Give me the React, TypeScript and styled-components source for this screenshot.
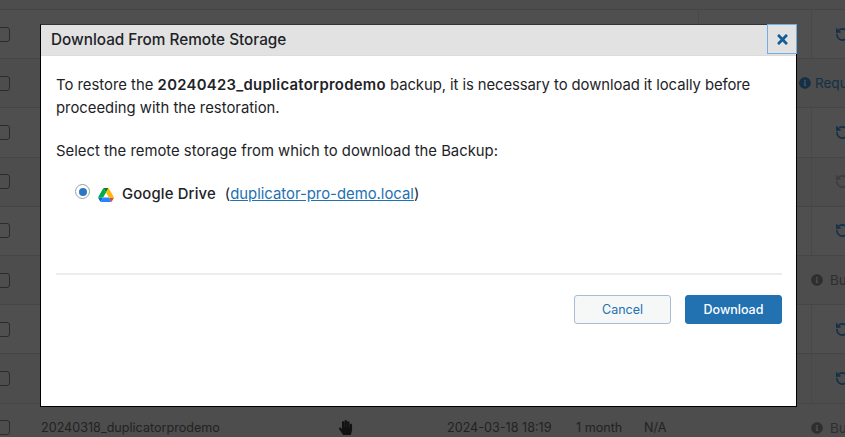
import React from 'react';
import styled, { createGlobalStyle } from 'styled-components';
import { FaHandPaper, FaInfoCircle, FaTimes } from 'react-icons/fa';
import { RotateCcw } from 'lucide-react';

const GlobalStyle = createGlobalStyle`
  html, body {
    margin: 0;
    padding: 0;
    width: 845px;
    height: 437px;
    overflow: hidden;
    background: #4e4e4e;
    font-family: Inter, "Liberation Sans", sans-serif;
  }
`;

const Page = styled.div`
  position: relative;
  width: 845px;
  height: 437px;
  overflow: hidden;
`;

const Table = styled.div`
  display: flex;
  flex-direction: column;
  padding-top: 9px;
  background: #4d4d4d;
`;

const Row = styled.div<{ $even?: boolean }>`
  display: grid;
  grid-template-columns: 41px 297px 109px 129px 68px 54px 113px 34px;
  align-items: stretch;
  height: 49.2px;
  box-sizing: border-box;
  border-top: 1px solid #454545;
  background: ${(p) => (p.$even ? '#4f4f4f' : '#4d4d4d')};
  color: #222;
  font-size: 12.6px;
`;

const Cell = styled.div<{ $col: number; $span?: number; $line?: boolean; $pad?: number }>`
  grid-column: ${(p) => p.$col} / span ${(p) => p.$span ?? 1};
  display: flex;
  align-items: center;
  padding-left: ${(p) => p.$pad ?? 0}px;
  border-left: ${(p) => (p.$line ? '1px solid #484848' : 'none')};
  white-space: nowrap;
  overflow: hidden;
`;

const Check = styled.span`
  display: block;
  flex: none;
  width: 13px;
  height: 13px;
  margin-left: -5px;
  border: 1px solid #2b2b2b;
  border-radius: 3px;
`;

const Status = styled.span<{ $blue?: boolean }>`
  display: inline-flex;
  align-items: center;
  gap: ${(p) => (p.$blue ? 4 : 7)}px;
  font-size: 13.5px;
  color: ${(p) => (p.$blue ? '#123047' : '#2e2e2e')};
`;

const Restore = styled(RotateCcw)<{ $muted?: boolean }>`
  flex: none;
  width: 15px;
  height: 15px;
  margin-left: 23px;
  color: ${(p) => (p.$muted ? '#3d3d3d' : '#123047')};
`;

const Overlay = styled.div`
  position: absolute;
  left: 40px;
  top: 24px;
  width: 757px;
  height: 383px;
  box-sizing: border-box;
  display: flex;
  flex-direction: column;
  background: #fff;
  border: 1px solid #000;
  border-top-color: #333;
`;

const TitleBar = styled.div`
  position: relative;
  flex: none;
  height: 31px;
  box-sizing: border-box;
  padding: 6px 0 0 10px;
  background: #e2e2e2;
  border-bottom: 1px solid #dcdcdc;
  font-size: 15.3px;
  line-height: 18px;
  font-weight: 500;
  color: #1d2327;
`;

const CloseButton = styled.button`
  position: absolute;
  right: -1px;
  top: -1px;
  width: 30px;
  height: 30px;
  padding: 0;
  display: flex;
  align-items: center;
  justify-content: center;
  background: #e2e2e2;
  border: 1px solid #72aee6;
  color: #135e96;
`;

const Body = styled.div`
  flex: 1;
  display: flex;
  flex-direction: column;
  padding: 18px 14px 0 15px;
  color: #1d2327;
  font-size: 14.85px;
  line-height: 23.2px;
`;

const Text = styled.p`
  margin: 0 0 20px;
  &:last-of-type {
    margin-bottom: 19px;
  }
  strong {
    font-weight: 600;
    letter-spacing: 0.3px;
  }
`;

const Tail = styled.span`
  letter-spacing: -0.07px;
`;

const Choice = styled.label`
  display: flex;
  align-items: center;
  margin: 0 0 0 19px;
`;

const Radio = styled.span`
  flex: none;
  width: 15px;
  height: 15px;
  box-sizing: border-box;
  border: 1.5px solid #a0a0a0;
  border-radius: 50%;
  margin-right: 8px;
  margin-top: -5px;
  display: flex;
  align-items: center;
  justify-content: center;
  &::after {
    content: '';
    width: 8px;
    height: 8px;
    border-radius: 50%;
    background: #2b77c4;
  }
`;

const DriveIcon = styled.svg`
  flex: none;
  width: 16px;
  height: 14px;
  margin-right: 8px;
  margin-top: 2px;
`;

const DriveName = styled.span`
  font-weight: 500;
  letter-spacing: 0.15px;
  margin-right: 9px;
`;

const StorageLink = styled.a`
  color: #2271b1;
  text-decoration: underline;
`;

const Divider = styled.hr`
  width: 100%;
  margin: 67px 0 0;
  border: 0;
  border-top: 2px solid #ededed;
`;

const Actions = styled.div`
  display: flex;
  justify-content: flex-end;
  gap: 14px;
  margin-top: 20px;
`;

const Button = styled.button<{ $primary?: boolean }>`
  width: 97px;
  height: 29px;
  padding: 0;
  border-radius: 3px;
  font-family: inherit;
  font-size: 12.5px;
  font-weight: ${(p) => (p.$primary ? 500 : 400)};
  background: ${(p) => (p.$primary ? '#2271b1' : '#f6f7f7')};
  color: ${(p) => (p.$primary ? '#fff' : '#2271b1')};
  border: 1px solid ${(p) => (p.$primary ? '#2271b1' : '#a9bcd6')};
`;

type RowKind = 'restore' | 'muted' | 'request' | 'build';

const rows: RowKind[] = ['restore', 'request', 'restore', 'muted', 'restore', 'build', 'restore', 'restore'];

function GoogleDrive() {
  return (
    <DriveIcon viewBox="0 0 87.3 78">
      <path d="m6.6 66.85 3.85 6.65c.8 1.4 1.95 2.5 3.3 3.3l13.75-23.8h-27.5c0 1.55.4 3.1 1.2 4.5z" fill="#0066da" />
      <path d="m43.65 25-13.75-23.8c-1.35.8-2.5 1.9-3.3 3.3l-25.4 44a9.06 9.06 0 0 0 -1.2 4.5h27.5z" fill="#00ac47" />
      <path d="m73.55 76.8c1.35-.8 2.5-1.9 3.3-3.3l1.6-2.75 7.65-13.25c.8-1.4 1.2-2.95 1.2-4.5h-27.502l5.852 11.5z" fill="#ea4335" />
      <path d="m43.65 25 13.75-23.8c-1.35-.8-2.9-1.2-4.5-1.2h-18.5c-1.6 0-3.15.45-4.5 1.2z" fill="#00832d" />
      <path d="m59.8 53h-32.3l-13.75 23.8c1.35.8 2.9 1.2 4.5 1.2h50.8c1.6 0 3.15-.45 4.5-1.2z" fill="#2684fc" />
      <path d="m73.4 26.5-12.7-22c-.8-1.4-1.95-2.5-3.3-3.3l-13.75 23.8 16.15 28h27.45c0-1.55-.4-3.1-1.2-4.5z" fill="#ffba00" />
    </DriveIcon>
  );
}

function BackgroundRow({ kind, even }: { kind: RowKind; even: boolean }) {
  return (
    <Row $even={even}>
      <Cell $col={1}>
        <Check />
      </Cell>
      {kind === 'request' && (
        <Cell $col={6} $span={3} $pad={155}>
          <Status $blue>
            <FaInfoCircle size={12} />
            Requ
          </Status>
        </Cell>
      )}
      {kind === 'build' && (
        <Cell $col={7} $span={2} $pad={113}>
          <Status>
            <FaInfoCircle size={12} />
            Bu
          </Status>
        </Cell>
      )}
      {(kind === 'restore' || kind === 'muted') && (
        <>
          <Cell $col={7} $line />
          <Cell $col={8} $line>
            <Restore $muted={kind === 'muted'} strokeWidth={2.6} />
          </Cell>
        </>
      )}
    </Row>
  );
}

export default function App() {
  return (
    <Page>
      <GlobalStyle />
      <Table>
        {rows.map((kind, i) => (
          <BackgroundRow key={i} kind={kind} even={i % 2 === 0} />
        ))}
        <Row>
          <Cell $col={1}>
            <Check />
          </Cell>
          <Cell $col={2}>20240318_duplicatorprodemo</Cell>
          <Cell $col={3}>
            <FaHandPaper size={15} color="#111" />
          </Cell>
          <Cell $col={4}>2024-03-18 18:19</Cell>
          <Cell $col={5}>1 month</Cell>
          <Cell $col={6}>N/A</Cell>
          <Cell $col={7} $span={2} $pad={113}>
            <Status>
              <FaInfoCircle size={12} />
              Bu
            </Status>
          </Cell>
        </Row>
      </Table>
      <Overlay>
        <TitleBar>
          Download From Remote Storage
          <CloseButton aria-label="Close">
            <FaTimes size={15} />
          </CloseButton>
        </TitleBar>
        <Body>
          <Text>
            To restore the <strong>20240423_duplicatorprodemo</strong>{' '}
            <Tail>backup, it is necessary to download it locally before</Tail> proceeding with the restoration.
          </Text>
          <Text>Select the remote storage from which to download the Backup:</Text>
          <Choice>
            <Radio />
            <GoogleDrive />
            <DriveName>Google Drive</DriveName>
            (<StorageLink href="#">duplicator-pro-demo.local</StorageLink>)
          </Choice>
          <Divider />
          <Actions>
            <Button>Cancel</Button>
            <Button $primary>Download</Button>
          </Actions>
        </Body>
      </Overlay>
    </Page>
  );
}
